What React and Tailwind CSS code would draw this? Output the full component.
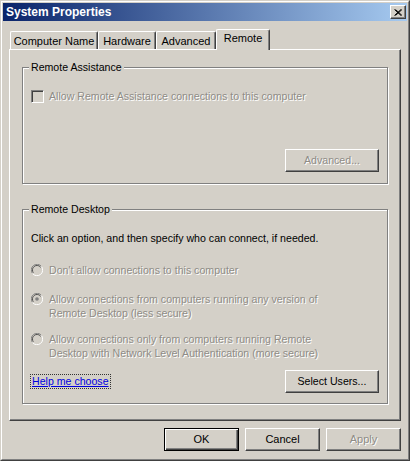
import React from "react";

const raised =
  "border border-t-white border-l-white border-r-[#404040] border-b-[#404040] shadow-[inset_-1px_-1px_0_#808080]";
const disabledText = "text-[#8f8c86] [text-shadow:1px_1px_0_#ffffff]";

function Btn({ children, disabled, def, className = "" }) {
  const frame = def
    ? "border border-black shadow-[inset_1px_1px_0_#fff,inset_-1px_-1px_0_#404040,inset_-2px_-2px_0_#808080]"
    : raised;
  return (
    <div
      className={`h-[23px] flex items-center justify-center bg-[#d4d0c8] ${frame} ${
        disabled ? disabledText : "text-black"
      } ${className}`}
    >
      {children}
    </div>
  );
}

function Radio({ checked }) {
  return (
    <svg width="12" height="12" viewBox="0 0 12 12" className="shrink-0">
      <path d="M10.5 2.5 A5.5 5.5 0 0 0 1.5 9.5" fill="none" stroke="#808080" />
      <path d="M9.6 3.4 A4.3 4.3 0 0 0 2.4 8.6" fill="none" stroke="#404040" />
      <path d="M1.5 9.5 A5.5 5.5 0 0 0 10.5 2.5" fill="none" stroke="#ffffff" />
      <circle cx="6" cy="6" r="3.8" fill="#d4d0c8" />
      {checked && <circle cx="6" cy="6" r="1.8" fill="#808080" />}
    </svg>
  );
}

function Group({ label, className = "", children }) {
  return (
    <div
      className={`relative border border-[#808080] shadow-[inset_1px_1px_0_#fff,1px_1px_0_#fff] ${className}`}
    >
      <div className="absolute left-[6px] -top-[8px] px-[2px] bg-[#d4d0c8] leading-[14px] text-black">
        {label}
      </div>
      {children}
    </div>
  );
}

function Tab({ children, w, selected }) {
  return (
    <div
      className={`${w} flex items-center justify-center rounded-t-[2px] border-l border-t border-l-white border-t-white border-r border-r-[#404040] shadow-[inset_-1px_0_0_#808080] bg-[#d4d0c8] ${
        selected ? "h-[21px] -mb-[1px] relative z-10 pb-[3px]" : "h-[18px] pt-[1px]"
      }`}
    >
      {children}
    </div>
  );
}

export default function App() {
  return (
    <div className="w-[410px] h-[461px] bg-[#d4d0c8] border border-t-[#d4d0c8] border-l-[#d4d0c8] border-r-[#404040] border-b-[#404040] font-['Liberation_Sans',Arial,sans-serif] text-[10.6px] text-black select-none">
      <div className="h-full border border-t-white border-l-white border-r-[#808080] border-b-[#808080] p-[1px] flex flex-col">
        {/* title bar */}
        <div className="h-[18px] shrink-0 flex items-center justify-between pl-[3px] pr-[1px] bg-[linear-gradient(to_right,#0a246a,#a6caf0)]">
          <span className="text-white font-bold text-[12px] leading-none">System Properties</span>
          <div className={`w-[16px] h-[14px] flex items-center justify-center bg-[#d4d0c8] ${raised}`}>
            <svg width="8" height="7" viewBox="0 0 8 7">
              <path d="M0.5 0.5 L7 6.5 M1.5 0.5 L8 6.5 M7 0.5 L0.5 6.5 M8 0.5 L1.5 6.5" stroke="#000" strokeWidth="1" />
            </svg>
          </div>
        </div>

        {/* tabs */}
        <div className="mt-[8px] h-[20px] flex items-end pl-[7px] shrink-0 text-[11px]">
          <Tab w="w-[88px]">Computer Name</Tab>
          <Tab w="w-[58px]">Hardware</Tab>
          <Tab w="w-[60px]">Advanced</Tab>
          <Tab w="w-[54px]" selected>
            Remote
          </Tab>
        </div>

        {/* panel */}
        <div className="ml-[6px] w-[392px] h-[372px] shrink-0 border border-t-white border-l-white border-r-[#404040] border-b-[#404040] shadow-[inset_-1px_-1px_0_#808080] pt-[17px] pl-[12px]">
          <Group label="Remote Assistance" className="w-[366px] h-[117px] flex flex-col">
            <div className={`flex items-center mt-[21px] pl-[8px] ${disabledText}`}>
              <div className="w-[13px] h-[13px] shrink-0 border border-t-[#808080] border-l-[#808080] border-r-white border-b-white shadow-[inset_1px_1px_0_#404040,inset_-1px_-1px_0_#d4d0c8] bg-[#d4d0c8]" />
              <span className="ml-[5px] leading-[14px]">Allow Remote Assistance connections to this computer</span>
            </div>
            <div className="mt-auto mb-[11px] mr-[8px] flex justify-end">
              <Btn disabled className="w-[94px]">
                Advanced...
              </Btn>
            </div>
          </Group>

          <Group label="Remote Desktop" className="mt-[25px] w-[366px] h-[195px] flex flex-col">
            <div className="mt-[21px] pl-[8px] leading-[14px]">
              Click an option, and then specify who can connect, if needed.
            </div>
            <div className={`mt-[18px] pl-[8px] flex items-start gap-[6px] leading-[14px] ${disabledText}`}>
              <div className="mt-[1px]">
                <Radio />
              </div>
              <span>Don't allow connections to this computer</span>
            </div>
            <div className={`mt-[15px] pl-[8px] flex items-start gap-[6px] leading-[14px] ${disabledText}`}>
              <div className="mt-[1px]">
                <Radio checked />
              </div>
              <span>
                Allow connections from computers running any version of
                <br />
                Remote Desktop (less secure)
              </span>
            </div>
            <div className={`mt-[12px] pl-[8px] flex items-start gap-[6px] leading-[14px] ${disabledText}`}>
              <div className="mt-[1px]">
                <Radio />
              </div>
              <span>
                Allow connections only from computers running Remote
                <br />
                Desktop with Network Level Authentication (more secure)
              </span>
            </div>
            <div className="mt-[10px] pl-[7px] pr-[8px] flex items-center justify-between">
              <span className="border border-dotted border-[#333] px-[1px] leading-[13px] text-[#0000e0] underline underline-offset-[1px]">
                Help me choose
              </span>
              <Btn className="w-[94px]">Select Users...</Btn>
            </div>
          </Group>
        </div>

        {/* bottom buttons */}
        <div className="mt-[7px] flex justify-end gap-[6px] pr-[6px] text-[11px]">
          <Btn def className="w-[75px]">
            OK
          </Btn>
          <Btn className="w-[75px]">Cancel</Btn>
          <Btn disabled className="w-[75px]">
            Apply
          </Btn>
        </div>
      </div>
    </div>
  );
}
